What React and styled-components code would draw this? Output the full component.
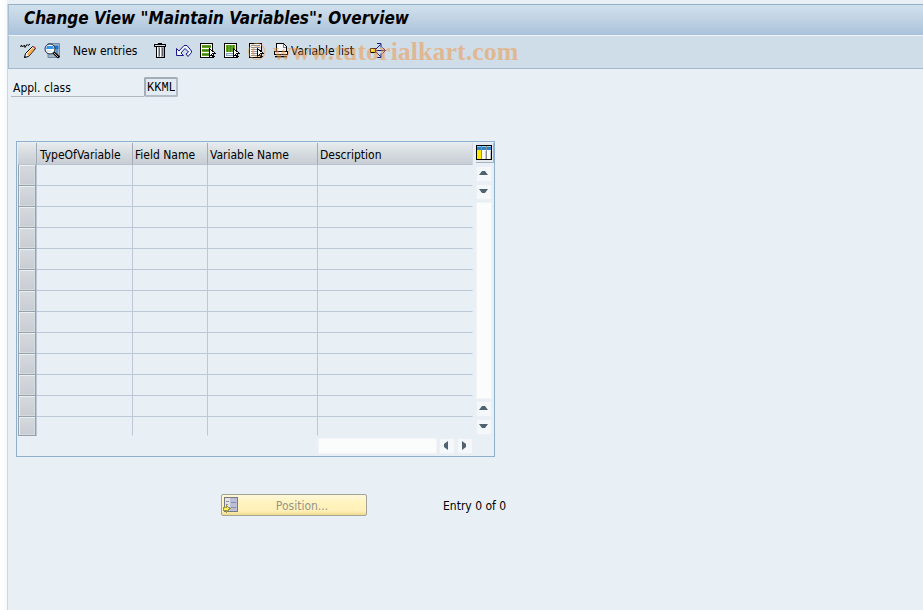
import React from 'react'
import styled, { createGlobalStyle, css } from 'styled-components';

const uiFont = '"DejaVu Sans Condensed", Tahoma, "DejaVu Sans", sans-serif';

const columns = [
    { title: 'TypeOfVariable', width: 96 },
    { title: 'Field Name', width: 75 },
    { title: 'Variable Name', width: 110 },
    { title: 'Description', width: 155 },
];
const rows = Array.from({ length: 13 }, (_, i) => i + 1);

const GlobalStyle = createGlobalStyle`
* { box-sizing: border-box; }
body {
    margin: 0;
    background: #e8f0f6;
    color: #000;
    font: 12px/16px ${uiFont};
}
button, input { font: inherit; color: inherit; }
`

const Page = styled.div`
min-height: 100vh;
padding-top: 4px;
padding-left: 7px;
background: linear-gradient(90deg, #fff, #f6f9fc 7px, #e8f0f6 7px);
`

const Screen = styled.main`
min-height: calc(100vh - 4px);
border-left: 1px solid #cdd7e4;
`

const TitleBar = styled.h1`
margin: 0;
height: 31px;
padding: 2px 15px;
border-top: 1px solid #96aec5;
border-left: 1px solid #a9bdd0;
background: linear-gradient(#d0e0ed, #c1d3e3 45%, #a9c2dc);
font: italic bold 17px/22px ${uiFont};
`

const Toolbar = styled.div`
display: flex;
align-items: center;
gap: 8px;
height: 34px;
padding: 0 0 2px 11px;
border-top: 1px solid #edf3f8;
border-left: 1px solid #a9bdd0;
border-bottom: 1px solid #a6b8cb;
background: #cfdde8;
position: relative;
`

const ToolButton = styled.button`
display: flex;
align-items: center;
gap: 2px;
height: 20px;
padding: 0;
border: 0;
background: none;
white-space: nowrap;
${({ $text }) =>
        $text &&
        css`
            width: 76px;
            padding-left: 5px;
        `}
${({ $wide }) =>
        $wide &&
        css`
            width: 90px;
            padding-left: 1px;
        `}
`

const Watermark = styled.span`
position: absolute;
left: 238px;
top: 0;
color: rgba(240, 148, 62, 0.5);
font: bold 26px/32px "Liberation Serif", serif;
white-space: pre;
pointer-events: none;
`

const Field = styled.div`
display: flex;
align-items: flex-end;
margin: 8px 0 0 3px;
`

const FieldLabel = styled.label`
width: 133px;
height: 19px;
padding: 2px 2px 0;
border-bottom: 1px solid #b4b8bc;
`

const FieldInput = styled.input`
width: 34px;
height: 20px;
padding: 1px 1px 0;
border: 2px solid #a3adb6;
border-right-color: #b4bdc6;
border-bottom-color: #b4bdc6;
border-radius: 2px;
background: #e2ebf3;
font: 12px/15px "Liberation Mono", monospace;
outline: none;
`

const GridPanel = styled.section`
display: grid;
grid-template-columns: 455px 16px;
column-gap: 3px;
width: max-content;
margin: 44px 0 0 8px;
padding: 1px 2px 2px 1px;
border: 1px solid #8fb0cd;
`

const Table = styled.table`
border-collapse: separate;
border-spacing: 0;
table-layout: fixed;
width: 455px;
`

const HeadCell = styled.th`
height: 22px;
padding: 2px 2px 0;
border-right: 1px solid ${(props) => (props.$last ? '#d3d9de' : '#a3acb6')};
border-bottom: 1px solid #b8c3cf;
background: linear-gradient(#e7ebee, #d3d9dd 55%, #c9ced5);
font-weight: normal;
line-height: 16px;
text-align: left;
white-space: nowrap;
&:nth-child(2) { padding-left: 3px; }
`

const Cell = styled.td`
height: 21px;
padding: 0;
border-right: 1px solid ${(props) => (props.$last ? 'transparent' : '#bcc8d7')};
border-bottom: 1px solid #bcc8d7;
tr:last-child > & { height: 19px; border-bottom-color: transparent; }
`

const Selector = styled.th`
height: 21px;
padding: 0;
border: 1px solid #97a2af;
border-top: 0;
border-right-color: #bcc8d7;
background: linear-gradient(#d5dadf, #c8cdd4);
box-shadow: inset -1px 0 0 #97a2af, inset 1px 1px 0 #edf0f2, inset -2px -1px 0 #d5dadd;
tr:last-child > & { height: 19px; }
`

const Side = styled.div`
display: flex;
flex-direction: column;
gap: 2px;
padding-bottom: 1px;
`

const ConfigButton = styled.button`
display: flex;
width: 18px;
height: 20px;
margin-bottom: 1px;
padding: 2px 0 1px;
border: 0;
border-right: 1px solid #a8b3bd;
border-bottom: 1px solid #a8b3bd;
background: #e5eaef;
`

const ScrollButton = styled.button`
display: flex;
align-items: center;
justify-content: center;
width: 16px;
height: 16px;
padding: 0;
border: 1px solid #eceff4;
background: #f5f8fb;
`

const Track = styled.div`
flex: 1;
border: 1px solid #f2f4f7;
background: #fbfcfc;
`

const BottomScroll = styled.div`
display: flex;
gap: 2px;
height: 16px;
margin: 2px 0 0 300px;
`

const Footer = styled.div`
display: flex;
align-items: center;
gap: 76px;
margin: 37px 0 0 213px;
`

const PositionButton = styled.button`
display: flex;
align-items: center;
width: 146px;
height: 22px;
padding: 0 1px;
border: 1px solid #a5a297;
border-radius: 2px;
background: linear-gradient(#fdf8dc, #fff3bf 35%, #fff0b8 80%, #efd98c);
color: #96958c;
`

const FooterText = styled.span`
padding-top: 2px;
${PositionButton} > & { flex: 1; text-align: center; }
`

const Glyph = styled.svg`
display: block;
flex: none;
width: 16px;
height: 16px;
`

const Icon = ({ children, smooth }) => (
    <Glyph viewBox="0 0 16 16" shapeRendering={smooth ? 'auto' : 'crispEdges'} aria-hidden="true">
        {children}
    </Glyph>
);

const PencilIcon = () => (
    <Icon smooth>
        <path d="M.5 4L1.500 2l1 2 2-2L5 4.500l2-3 1 1 2-1.500" fill="none" stroke="#000" />
        <path d="M4.500 14.500l1-4 7-7 3 2-7 8z" fill="#fff" stroke="#000" />
        <path d="M7 11l5.500-6L14.500 6l-6 7z" fill="#f9a640" />
        <path d="M6.500 10.500L12 5" stroke="#ffe9b8" />
        <path d="M13 3.500l2.500 1.500" stroke="#db5a4c" strokeWidth="1.5" />
        <path d="M4 15l1-2 1 1z" fill="#000" />
    </Icon>
);

const DisplayIcon = () => (
    <Icon smooth>
        <path d="M4 .5h11.500v14H4z" fill="#9eb4c8" stroke="#7289a1" />
        <path d="M9 3h5v3h-2zM12 8h2M12 10h2" fill="#1d75cb" stroke="#1d75cb" />
        <path d="M9.500 9.500l5.500 5" stroke="#000" strokeWidth="3" />
        <path d="M10 10l4 4" stroke="#d6a98c" />
        <circle cx="6" cy="6" r="5" fill="#fff" stroke="#18283a" />
        <path d="M3 3h6l1 3H2z" fill="#3797e6" />
        <path d="M3 8h4" stroke="#b8d3ea" />
    </Icon>
);

const TrashIcon = () => (
    <Icon>
        <path d="M6 0h4v1h4v3h-1v11H4V4H2V1h4z" fill="#000" />
        <path d="M3 2h10v1H3z" fill="#d5dde4" />
        <path d="M5 4h7v10H5z" fill="#a5adb5" />
        <path d="M5 4h1v10H5zM8 4h1v10H8z" fill="#fff" />
        <path d="M7 5h1v8H7zM10 5h1v8h-1z" fill="#58616a" />
    </Icon>
);

const UndoIcon = () => (
    <Icon smooth>
        <path d="M.5 5.500v7h7L5 10l4-4.500L12.500 9 10 11l2 2.500 3.500-4V8L11 2.500H8L3 8z" fill="#eef2fa" stroke="#19198c" />
    </Icon>
);

const Cursor = () => (
    <path d="M9.500 5.500v8l2-2 1.500 3 1-1-1-3h2.500z" fill="#fff" stroke="#000" />
);

const SelectAllIcon = () => (
    <Icon>
        <path d="M.5.5h12v14H.5z" fill="#fff" stroke="#000" />
        <path d="M2 2h9v3H2zM2 6h9v3H2zM2 10h9v3H2z" fill="#65a421" />
        <path d="M2 3.500h9M2 7.500h9M2 11.500h9" stroke="#41821c" />
        <Cursor />
    </Icon>
);

const SelectBlockIcon = () => (
    <Icon>
        <path d="M.5.5h12v14H.5z" fill="#fff" stroke="#000" />
        <path d="M2 2h9v7H2z" fill="#65a421" />
        <path d="M3.500 2v7M6.500 2v7M9.500 2v7" stroke="#41821c" />
        <path d="M2 10.500h7v2H2z" fill="#e8eef4" stroke="#8ba3b8" />
        <Cursor />
    </Icon>
);

const DeselectIcon = () => (
    <Icon>
        <path d="M1.500.5h12v14h-12z" fill="#fff" stroke="#000" />
        <path d="M3 2.500h9M3 4.500h9M3 6.500h9M3 8.500h9M3 10.500h9M3 12.500h9" stroke="#7f99ac" />
        <Cursor />
    </Icon>
);

const PrintIcon = () => (
    <Icon>
        <path d="M3.500 8.500v-8h7l3 3v5" fill="#f5f8fb" stroke="#000" />
        <path d="M10.500 1v3H13" fill="none" stroke="#708090" />
        <path d="M1.500 8.500h13v3h-13z" fill="#fff" stroke="#000" />
        <path d="M2 13.500h12" stroke="#000" />
        <path d="M2 14.500h12" stroke="#8b959d" />
    </Icon>
);

const TransportIcon = () => (
    <Icon smooth>
        <path d="M6 7.500h9M12.500 4.500l3 3-3 3M6 6l4.500-4.500M7 .5h4v4M6 9l4.500 4.500M7 14.500h4v-4" fill="none" stroke="#17177f" />
        <path d="M.5 5.500h5v4h-5z" fill="#ffdd13" stroke="#000" />
        <path d="M1 6h2v1H1z" fill="#fff7a8" />
    </Icon>
);

const ConfigIcon = () => (
    <Icon>
        <path d="M0 0h16v15H0z" fill="#000" />
        <path d="M1 1h14v13H1z" fill="#fff" />
        <path d="M1 1h14v1H1z" fill="#8fd4f2" />
        <path d="M1 2h14v3H1z" fill="#2f83c0" />
        <path d="M1 5h4v9H1z" fill="#ffe700" />
        <path d="M5 1h1v13H5zM10 1h1v13h-1z" fill="#8a8f94" />
        <path d="M9 6h1v8H9zM14 6h1v8h-1z" fill="#c2c7cc" />
    </Icon>
);

const PositionIcon = () => (
    <Icon>
        <path d="M1.500.5h13v14h-13z" fill="#e3e3e2" stroke="#77797e" />
        <path d="M7 1h7v13H7z" fill="#bcbdd6" />
        <path d="M8 5.500h5M8 10.500h5M3 4.500h3M3 7.500h2" stroke="#8c8fa1" />
        <path d="M.5 10.500h3v-2l3.500 3-3.500 3.500v-2h-3z" fill="#fff05c" stroke="#9c963e" />
    </Icon>
);

const arrows = {
    up: 'M3 9h9L9 5H6z',
    down: 'M3 5h9l-3 4H6z',
    left: 'M9 3v9L5 9V6z',
    right: 'M5 3v9l4-3V6z',
};

const ScrollArrow = ({ to }) => (
    <ScrollButton aria-label={`Scroll ${to}`}>
        <Icon smooth><path d={arrows[to]} fill="#506170" /></Icon>
    </ScrollButton>
);

export default function App() {
    return (
        <Page>
            <GlobalStyle />
            <Screen>
                <TitleBar>Change View "Maintain Variables": Overview</TitleBar>
                <Toolbar>
                    <ToolButton aria-label="Change"><PencilIcon /></ToolButton>
                    <ToolButton aria-label="Display"><DisplayIcon /></ToolButton>
                    <ToolButton $text>New entries</ToolButton>
                    <ToolButton aria-label="Delete"><TrashIcon /></ToolButton>
                    <ToolButton aria-label="Undo"><UndoIcon /></ToolButton>
                    <ToolButton aria-label="Select all"><SelectAllIcon /></ToolButton>
                    <ToolButton aria-label="Select block"><SelectBlockIcon /></ToolButton>
                    <ToolButton aria-label="Deselect all"><DeselectIcon /></ToolButton>
                    <ToolButton $wide><PrintIcon />Variable list</ToolButton>
                    <ToolButton aria-label="Transport"><TransportIcon /></ToolButton>
                    <Watermark>© www.tutorialkart.com</Watermark>
                </Toolbar>
                <Field>
                    <FieldLabel htmlFor="appl-class">Appl. class</FieldLabel>
                    <FieldInput id="appl-class" defaultValue="KKML" readOnly />
                </Field>
                <GridPanel>
                    <Table>
                        <colgroup>
                            <col style={{ width: 19 }} />
                            {columns.map((c) => <col key={c.title} style={{ width: c.width }} />)}
                        </colgroup>
                        <thead>
                            <tr>
                                <HeadCell as="td" />
                                {columns.map((c, i) => (
                                    <HeadCell key={c.title} scope="col" $last={i === columns.length - 1}>{c.title}</HeadCell>
                                ))}
                            </tr>
                        </thead>
                        <tbody>
                            {rows.map((row) => (
                                <tr key={row}>
                                    <Selector scope="row" aria-label={`Row ${row}`} />
                                    {columns.map((c, i) => (
                                        <Cell key={c.title} $last={i === columns.length - 1} />
                                    ))}
                                </tr>
                            ))}
                        </tbody>
                    </Table>
                    <Side>
                        <ConfigButton aria-label="Configure columns"><ConfigIcon /></ConfigButton>
                        <ScrollArrow to="up" />
                        <ScrollArrow to="down" />
                        <Track />
                        <ScrollArrow to="up" />
                        <ScrollArrow to="down" />
                    </Side>
                    <BottomScroll>
                        <Track />
                        <ScrollArrow to="left" />
                        <ScrollArrow to="right" />
                    </BottomScroll>
                </GridPanel>
                <Footer>
                    <PositionButton disabled><PositionIcon /><FooterText>Position...</FooterText></PositionButton>
                    <FooterText>Entry 0 of 0</FooterText>
                </Footer>
            </Screen>
        </Page>
    )
}
